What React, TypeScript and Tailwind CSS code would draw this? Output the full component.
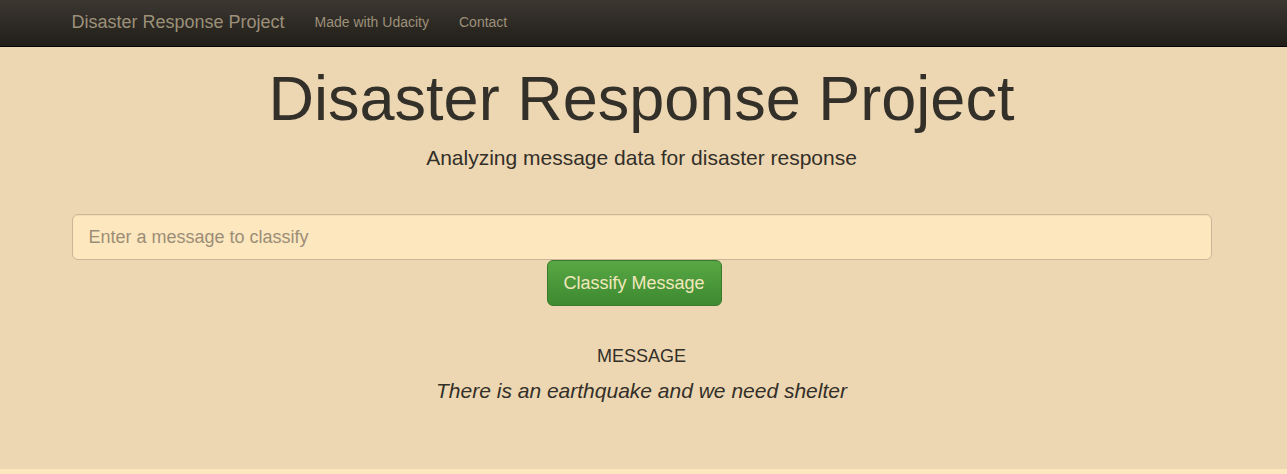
export default function App() {
  return (
    <div className="min-h-[474px] bg-[#fde7bf] font-['Liberation_Sans',Arial,sans-serif]">
      <nav className="h-[47px] border-b border-black bg-gradient-to-b from-[#3c3731] to-[#211e19]">
        <div className="w-[1283px]">
          <div className="mx-auto flex h-[44px] w-[1170px] items-center px-[15px]">
            <span className="text-[18px] leading-[20px] text-[#9d917a]">Disaster Response Project</span>
            <span className="ml-[30px] text-[14px] leading-[20px] text-[#9d917a]">Made with Udacity</span>
            <span className="ml-[30px] text-[14px] leading-[20px] text-[#9d917a]">Contact</span>
          </div>
        </div>
      </nav>
      <div className="h-[422px] bg-[#edd7b2]">
        <div className="w-[1283px]">
          <div className="mx-auto w-[1170px] px-[15px] text-center">
            <h1 className="pt-[17px] text-[63px] leading-[69px] text-[#332f29]">Disaster Response Project</h1>
            <p className="mt-[10px] text-[21px] leading-[30px] text-[#332f29]">Analyzing message data for disaster response</p>
            <div className="mt-[41px]">
              <div className="flex h-[46px] w-full items-center rounded-[6px] border border-[#cbb698] bg-[#fde7bf] px-[16px] text-left text-[18px] text-[#9b8e76] shadow-[inset_0_1px_1px_rgba(0,0,0,0.06)]">
                Enter a message to classify
              </div>
              <div className="flex justify-center">
                <div className="mr-[15px] flex h-[46px] w-[175px] items-center justify-center rounded-[6px] border border-[#3a7a2c] bg-gradient-to-b from-[#58a744] to-[#3d8a30] text-[18px] text-[#f2e7bc]">
                  Classify Message
                </div>
              </div>
            </div>
            <div className="mt-[40px] text-[18px] leading-[20px] text-[#332f29]">MESSAGE</div>
            <div className="mt-[12px] text-[21px] italic leading-[26px] text-[#332f29]">There is an earthquake and we need shelter</div>
          </div>
        </div>
      </div>
    </div>
  );
}
